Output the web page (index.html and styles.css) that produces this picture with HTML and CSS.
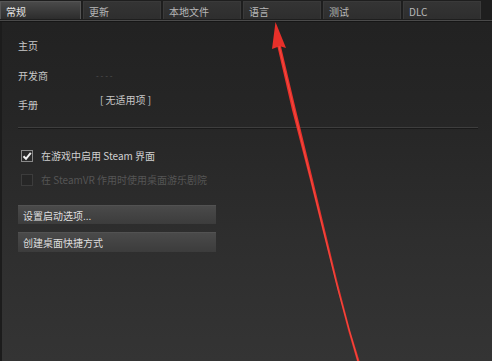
FILE: index.html
```html
<!DOCTYPE html>
<html lang="zh">
<head>
<meta charset="utf-8">
<link rel="stylesheet" href="styles.css">
</head>
<body>
<div class="page">
  <div class="tabs">
    <div class="tab active">常规</div>
    <div class="tab">更新</div>
    <div class="tab">本地文件</div>
    <div class="tab">语言</div>
    <div class="tab">测试</div>
    <div class="tab">DLC</div>
  </div>
  <div class="content">
    <div class="info">
      <div class="row"><span class="label">主页</span></div>
      <div class="row"><span class="label">开发商</span><span class="dash">- - - -</span></div>
      <div class="row"><span class="label">手册</span><span class="value">[ 无适用项 ]</span></div>
    </div>
    <div class="sep"></div>
    <div class="checks">
      <label class="check">
        <span class="box on">
          <svg width="10" height="10" viewBox="0 0 10 10"><path d="M1.5 5.2 L4 7.8 L8.8 1.8" fill="none" stroke="#f2f2f2" stroke-width="2"/></svg>
        </span>
        <span class="ctext">在游戏中启用 Steam 界面</span>
      </label>
      <label class="check disabled">
        <span class="box"></span>
        <span class="ctext">在 SteamVR 作用时使用桌面游乐剧院</span>
      </label>
    </div>
    <div class="buttons">
      <div class="btn">设置启动选项...</div>
      <div class="btn">创建桌面快捷方式</div>
    </div>
  </div>
  <svg class="arrow" width="492" height="361" viewBox="0 0 492 361">
    <polygon points="275.5,22 286,48 281,46.5 296,110 313,180 337,280 350,330 359.5,361 357,361 348,330 335,280 310,180 292,110 277.5,47 272,49" fill="#e8302a"/>
    <polyline points="279,46 296,118 316,200 338,290 358,361" fill="none" stroke="#ff6a5a" stroke-width="0.8" opacity="0.6"/>
  </svg>
</div>
</body>
</html>
```

FILE: styles.css
```css
html, body {
  margin: 0;
  padding: 0;
}
body {
  width: 492px;
  height: 361px;
  overflow: hidden;
  font-family: "Noto Sans CJK SC", "Liberation Sans", sans-serif;
  font-size: 10px;
  color: #c4c4c4;
}
.page {
  position: relative;
  width: 492px;
  height: 361px;
  background: linear-gradient(to bottom, #212121 0px, #262626 120px, #2e2e2e 240px, #343434 361px);
  border-left: 2px solid #1c1c1c;
  box-sizing: border-box;
}
.tabs {
  display: flex;
  gap: 2px;
  height: 19px;
  margin-left: -2px;
  background: #1e1e1e;
  border-bottom: 1px solid #4a4a4a;
  box-shadow: 0 1px 0 #161616;
  padding-right: 8px;
  padding-top: 1px;
  box-sizing: content-box;
}
.tab {
  width: 78px;
  height: 18px;
  line-height: 20px;
  padding-left: 5px;
  box-sizing: border-box;
  background: linear-gradient(to bottom, #343434, #2e2e2e);
  color: #b8b8b8;
  border: 1px solid #3a3a3a;
  border-bottom: none;
  font-size: 10px;
}
.tab.active {
  width: 81px;
  background: linear-gradient(to bottom, #4a4a4a, #2c2c2c);
  color: #e6e6e6;
  border-color: #555;
}
.content {
  padding: 10px 0 0 16px;
}
.info {
  display: flex;
  flex-direction: column;
}
.row {
  display: flex;
  align-items: center;
  height: 29.5px;
}
.label {
  width: 82px;
  color: #c8c8c8;
}
.dash {
  color: #555;
  font-size: 8px;
  margin-left: -4px;
}
.value {
  color: #c8c8c8;
  margin-top: -10px;
}
.sep {
  width: 460px;
  height: 1px;
  background: #3e3e3e;
  border-bottom: 1px solid #1a1a1a;
  margin-top: 7px;
}
.checks {
  display: flex;
  flex-direction: column;
  gap: 12px;
  padding-left: 3px;
  margin-top: 21px;
}
.check {
  display: flex;
  align-items: center;
  gap: 8px;
  height: 12px;
}
.box {
  width: 12px;
  height: 12px;
  box-sizing: border-box;
  border: 1px solid #3c3c3c;
  background: #262626;
  display: flex;
  align-items: center;
  justify-content: center;
}
.box.on {
  border-color: #8a8a8a;
  background: #2a2a2a;
}
.check .ctext {
  color: #d0d0d0;
}
.check.disabled .ctext {
  color: #555;
}
.buttons {
  display: flex;
  flex-direction: column;
  gap: 8px;
  margin-top: 19px;
}
.btn {
  width: 198px;
  height: 19.5px;
  line-height: 19px;
  padding-left: 5px;
  box-sizing: border-box;
  background: linear-gradient(to bottom, #4a4a4a, #3c3c3c);
  border-top: 1px solid #525252;
  color: #dedede;
}
.arrow {
  position: absolute;
  left: -2px;
  top: 0;
}
```
